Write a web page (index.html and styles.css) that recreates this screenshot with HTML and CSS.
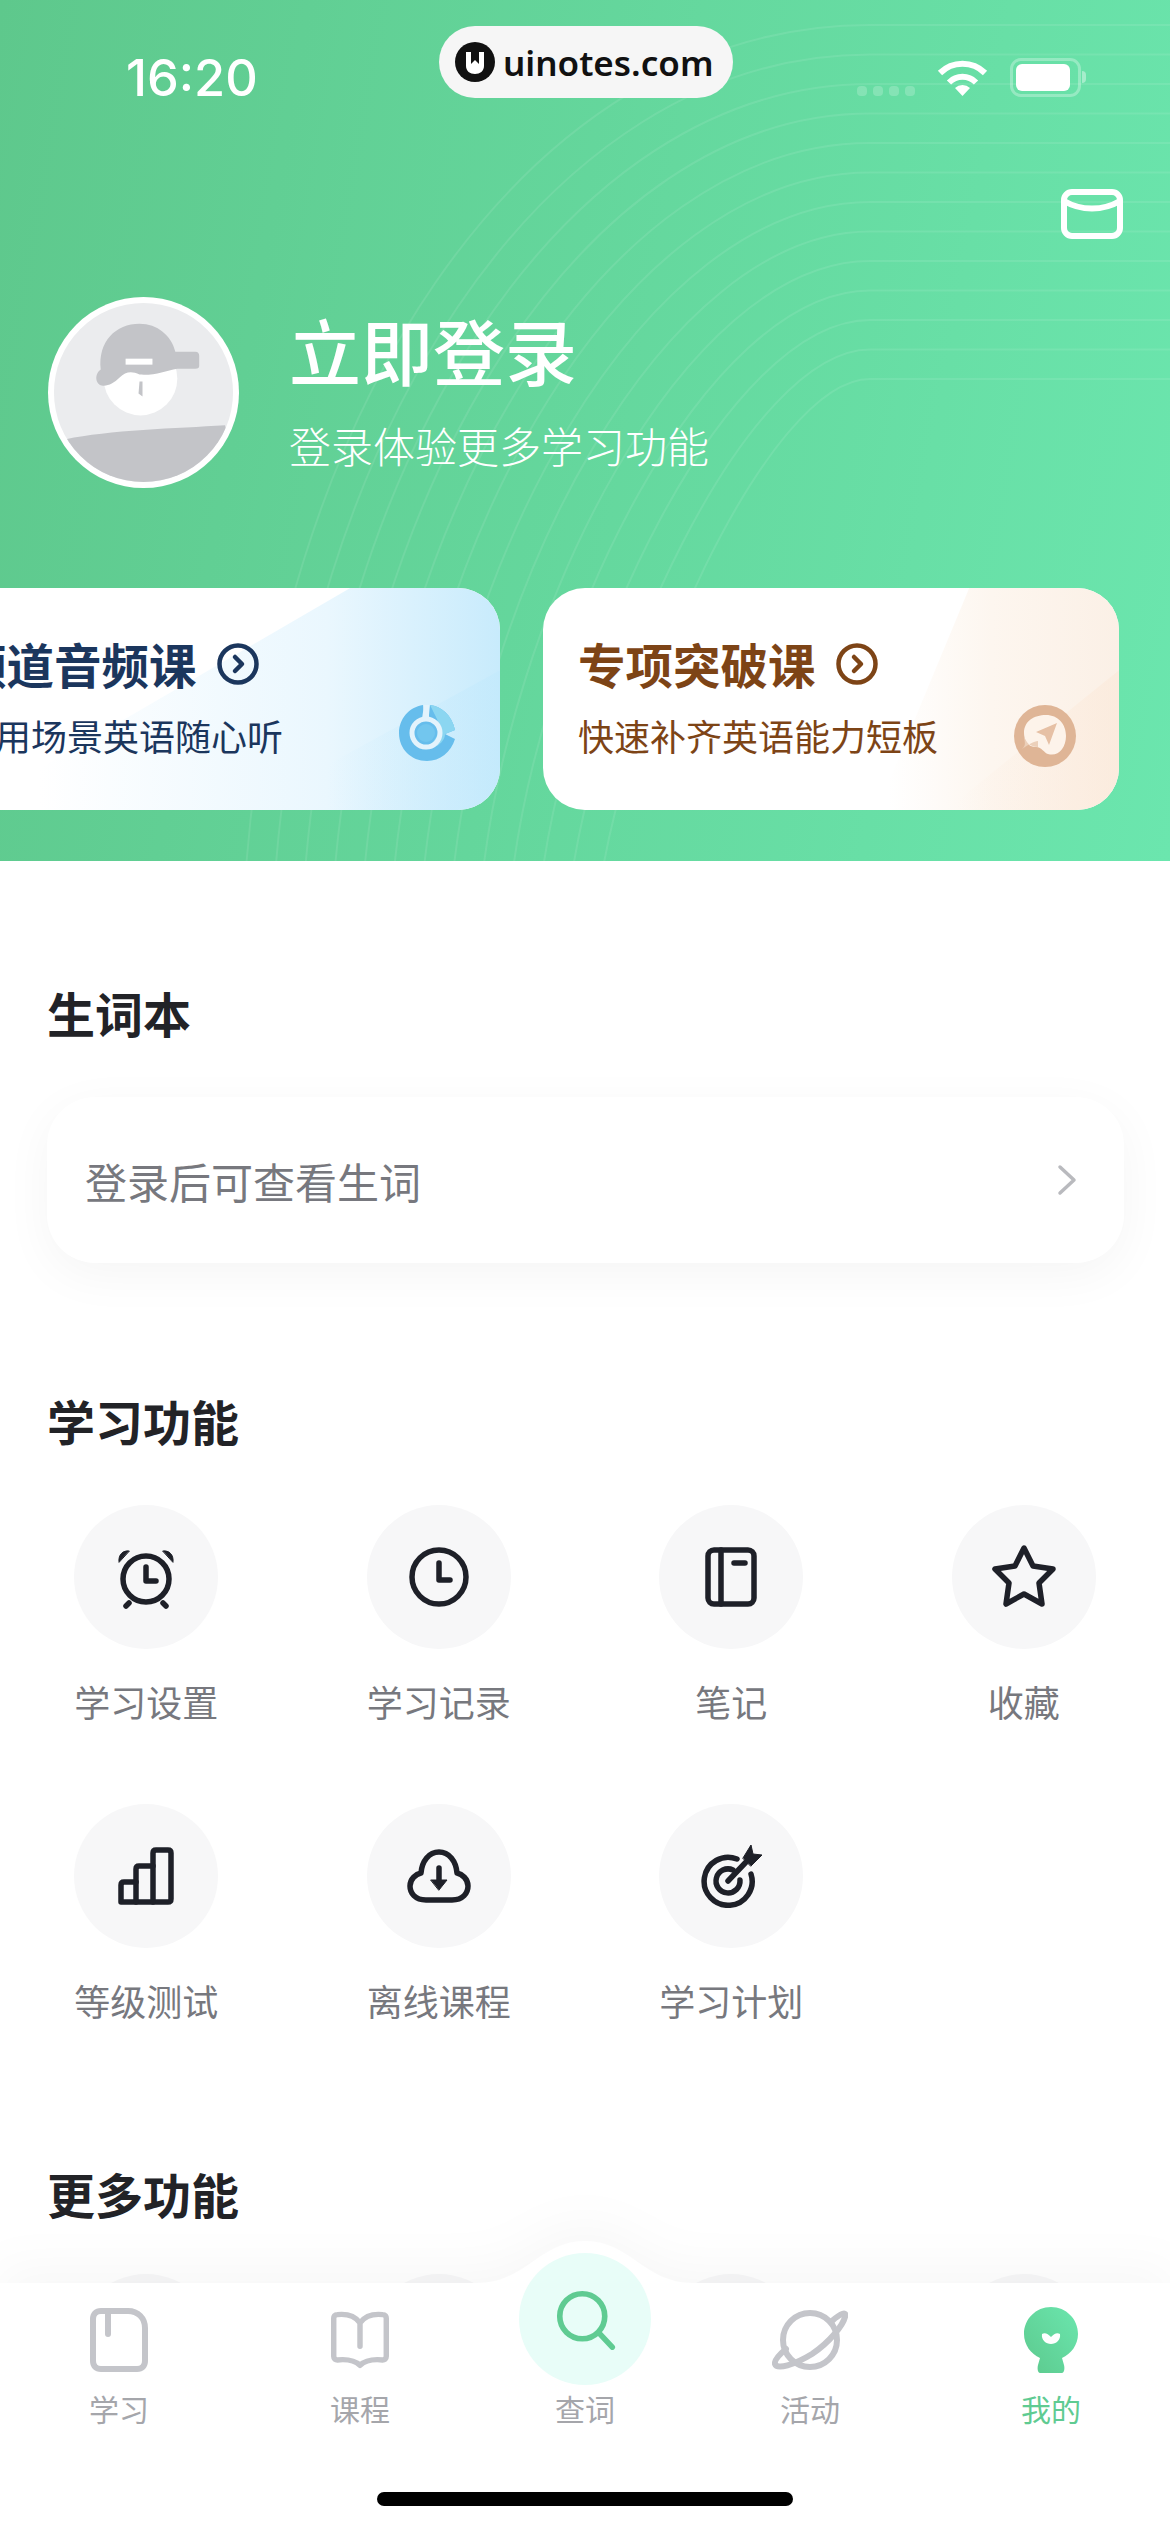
FILE: index.html
```html
<!DOCTYPE html>
<html lang="zh-CN">
<head>
  <meta charset="UTF-8">
  <meta name="viewport" content="width=device-width, initial-scale=1.0">
  <title>我的</title>
  <link rel="stylesheet" href="styles.css">
</head>
<body>
  <div class="page">
    <header class="hero">
      <svg class="hero-lines" viewBox="0 0 1170 861">
        <path d="M244 900C270 420 520 25 870 25H1170"/>
        <path d="M273.500 900C299.500 444 541 54.500 870 54.500H1170"/>
        <path d="M303 900C329 467 561 84 870 84H1170"/>
        <path d="M332.500 900C358.500 491 582 113.500 870 113.500H1170"/>
        <path d="M362 900C388 514 603 143 870 143H1170"/>
        <path d="M391.500 900C417.500 538 623 172.500 870 172.500H1170"/>
        <path d="M421 900C447 562 644 202 870 202H1170"/>
        <path d="M450.500 900C476.500 585 665 231.500 870 231.500H1170"/>
        <path d="M480 900C506 609 685 261 870 261H1170"/>
        <path d="M509.500 900C535.500 632 706 290.500 870 290.500H1170"/>
        <path d="M539 900C565 656 727 320 870 320H1170"/>
        <path d="M568.500 900C594.500 680 747 349.500 870 349.500H1170"/>
        <path d="M598 900C624 703 768 379 870 379H1170"/>
      </svg>

      <div class="status-bar">
        <span class="status-time">16:20</span>
        <div class="status-right">
          <div class="signal-dots"><i></i><i></i><i></i><i></i></div>
          <svg class="wifi" viewBox="0 0 51 37">
            <path d="M3 14A32 32 0 0 1 48 14M12 23.500A19 19 0 0 1 39 23.500" fill="none" stroke="#fff" stroke-width="6"/>
            <path d="M25.500 37L18 29A11 11 0 0 1 33 29Z" fill="#fff"/>
          </svg>
          <div class="battery"><div class="battery-level"></div></div>
          <div class="battery-nub"></div>
        </div>
      </div>

      <div class="site-badge">
        <svg class="site-logo" viewBox="0 0 40 40">
          <circle cx="20" cy="20" r="20" fill="#111"/>
          <path d="M11 10H16V22L20 18L24 22V10H29V24C29 29 25 32 20 32C15 32 11 29 11 24Z" fill="#fff"/>
        </svg>
        <span>uinotes.com</span>
      </div>

      <div class="mail-row">
        <svg class="mail-icon" viewBox="0 0 62 50" fill="none" stroke="#fff" stroke-width="6">
          <rect x="3" y="3" width="56" height="44" rx="8"/>
          <path d="M3 12C20 22 42 22 59 12"/>
        </svg>
      </div>

      <div class="profile">
        <svg class="avatar" viewBox="0 0 192 192">
          <defs><clipPath id="avatarClip"><circle cx="96" cy="96" r="90"/></clipPath></defs>
          <circle cx="96" cy="96" r="96" fill="#fff"/>
          <g clip-path="url(#avatarClip)">
            <rect width="192" height="192" fill="#ebecee"/>
            <path d="M18 143C60 134 130 132 178 129L192 192H0Z" fill="#c3c4c8"/>
          </g>
          <circle cx="93" cy="82" r="37" fill="#fff"/>
          <path d="M53 73C50 45 68 27 92 27C110 27 124 39 128 55H148C151 55 152 57 152 59V69C152 71 151 72 148 72H130C118 74 108 79 92 78C84 74 78 75 72 81C66 87 60 90 54 89C48 88 46 78 53 73Z" fill="#c3c4c8"/>
          <rect x="78" y="62" width="27" height="6" fill="#fff"/>
          <path d="M92 85L95 85L95 100L91 97Z" fill="#c3c4c8"/>
        </svg>
        <div class="profile-text">
          <div class="profile-title">立即登录</div>
          <div class="profile-sub">登录体验更多学习功能</div>
        </div>
      </div>

      <div class="promo-row">
        <div class="promo promo-blue">
          <div class="promo-title">
            <span>频道音频课</span>
            <svg class="promo-arrow" viewBox="0 0 42 42" fill="none" stroke="currentColor" stroke-width="4.500">
              <circle cx="21" cy="21" r="18.500"/><path d="M18 14L25 21L18 28" stroke-linecap="round" stroke-linejoin="round"/>
            </svg>
          </div>
          <div class="promo-sub">实用场景英语随心听</div>
          <svg class="promo-icon" viewBox="0 0 56 56">
            <path d="M24 0C10 2 0 14 0 28C0 44 12 56 28 56C41 56 52 47 56 34L46 29L56 25C53 10 42 1 31 0L30 10H25Z" fill="#66bdec"/>
            <path d="M31 0C42 1 53 10 56 25L46 29C46 38 34 46 22 44C32 42 44 30 38 14Z" fill="#8bd6f1"/>
            <circle cx="27" cy="28" r="14" fill="none" stroke="#e3f3fc" stroke-width="5"/>
            <path d="M25 0H30V14H23Z" fill="#e3f3fc"/>
            <circle cx="27" cy="28" r="9" fill="#72c6ee"/>
          </svg>
        </div>
        <div class="promo promo-orange">
          <div class="promo-title">
            <span>专项突破课</span>
            <svg class="promo-arrow" viewBox="0 0 42 42" fill="none" stroke="currentColor" stroke-width="4.500">
              <circle cx="21" cy="21" r="18.500"/><path d="M18 14L25 21L18 28" stroke-linecap="round" stroke-linejoin="round"/>
            </svg>
          </div>
          <div class="promo-sub">快速补齐英语能力短板</div>
          <svg class="promo-icon promo-icon-lg" viewBox="0 0 62 62">
            <circle cx="31" cy="31" r="31" fill="#dfb596"/>
            <path d="M10 28C10 16 20 10 32 10C44 10 52 19 52 31C52 43 44 52 34 49C30 48 28 42 22 42C14 42 10 36 10 28Z" fill="#fdf3ea"/>
            <path d="M10 30C10 36 13 40 8 44C14 40 20 36 24 36L24 42C16 42 11 37 10 30Z" fill="#ecd0ba"/>
            <path d="M43 18L22 27L31 31L35 40Z" fill="#e6c0a5"/>
          </svg>
        </div>
      </div>
    </header>

    <main class="content">
      <h2 class="section-title first">生词本</h2>
      <div class="word-card">
        <span>登录后可查看生词</span>
        <svg class="chevron" viewBox="0 0 20 32" fill="none" stroke="#b9babe" stroke-width="3.500">
          <path d="M3 3L17 16L3 29" stroke-linecap="round" stroke-linejoin="round"/>
        </svg>
      </div>

      <h2 class="section-title">学习功能</h2>
      <div class="feature-grid">
        <div class="feature">
          <div class="feature-circle">
            <svg class="feature-icon" viewBox="0 0 64 64">
              <circle cx="32" cy="34" r="23"/>
              <path d="M32 22V36H42"/>
              <path d="M15 58L12 61M49 58L52 61"/>
              <path class="solid" d="M5 17C4 10 9 5 15 6Z"/>
              <path class="solid" d="M59 17C60 10 55 5 49 6Z"/>
            </svg>
          </div>
          <div class="feature-label">学习设置</div>
        </div>
        <div class="feature">
          <div class="feature-circle">
            <svg class="feature-icon" viewBox="0 0 64 64">
              <circle cx="32" cy="32" r="27"/>
              <path d="M32 18V35H43"/>
            </svg>
          </div>
          <div class="feature-label">学习记录</div>
        </div>
        <div class="feature">
          <div class="feature-circle">
            <svg class="feature-icon" viewBox="0 0 64 64">
              <rect x="9" y="5" width="46" height="54" rx="6"/>
              <path d="M22 5V59M35 18H46"/>
            </svg>
          </div>
          <div class="feature-label">笔记</div>
        </div>
        <div class="feature">
          <div class="feature-circle">
            <svg class="feature-icon" viewBox="0 0 64 64">
              <path d="M32 3L41 21L61 24L47 38L50 59L32 49L14 59L17 38L3 24L23 21Z"/>
            </svg>
          </div>
          <div class="feature-label">收藏</div>
        </div>
        <div class="feature">
          <div class="feature-circle">
            <svg class="feature-icon" viewBox="0 0 64 64">
              <path d="M7 58V41C7 39 8 38 10 38H22V25C22 23 23 22 25 22H39V9C39 7 40 6 42 6H54C56 6 57 7 57 9V55C57 57 56 58 54 58Z"/>
              <path d="M22 38V58M39 22V58"/>
            </svg>
          </div>
          <div class="feature-label">等级测试</div>
        </div>
        <div class="feature">
          <div class="feature-circle">
            <svg class="feature-icon" viewBox="0 0 64 64">
              <path d="M19 56C8 56 3 49 3 42C3 35 9 30 14 29C15 17 22 8 32 8C42 8 49 17 50 29C55 30 61 35 61 42C61 49 56 56 45 56Z"/>
              <path d="M32 24V38"/>
              <path class="solid" d="M24 36H40L32 46Z"/>
            </svg>
          </div>
          <div class="feature-label">离线课程</div>
        </div>
        <div class="feature">
          <div class="feature-circle">
            <svg class="feature-icon" viewBox="0 0 64 64">
              <path d="M38 15A24 24 0 1 0 52 30"/>
              <path d="M34 26A12 12 0 1 0 41 36"/>
              <path d="M29 37L48 17"/>
              <path class="solid" d="M44 14L52 1L54 10L63 11L52 22Z"/>
            </svg>
          </div>
          <div class="feature-label">学习计划</div>
        </div>
      </div>

      <h2 class="section-title more">更多功能</h2>
      <div class="feature-grid more-row">
        <div class="feature"><div class="feature-circle"></div></div>
        <div class="feature"><div class="feature-circle"></div></div>
        <div class="feature"><div class="feature-circle"></div></div>
        <div class="feature"><div class="feature-circle"></div></div>
      </div>
    </main>

    <nav class="tab-bar">
      <svg class="tab-bg" viewBox="0 0 1170 292">
        <path d="M0 43H478C525 43 540 1 585 1C630 1 645 43 692 43H1170V292H0Z" fill="#fff"/>
      </svg>
      <div class="tab-items">
        <div class="tab">
          <svg class="tab-icon" viewBox="0 0 58 66" fill="none" stroke="#c4c5ca" stroke-width="6">
            <path d="M11 4H38C48 4 55 11 55 21V54C55 59 52 62 47 62H11C6 62 3 59 3 54V12C3 7 6 4 11 4Z"/>
            <path d="M18 4V27" stroke-linecap="round"/>
          </svg>
          <span>学习</span>
        </div>
        <div class="tab">
          <svg class="tab-icon" viewBox="0 0 64 66" fill="none" stroke="#c4c5ca" stroke-width="6">
            <path d="M32 14C26 6 16 4 7 5C4 5 3 7 3 9V51C3 54 5 55 7 55C17 54 26 55 32 61C38 55 47 54 57 55C59 55 61 54 61 51V9C61 7 60 5 57 5C48 4 38 6 32 14V40" stroke-linecap="round" stroke-linejoin="round"/>
          </svg>
          <span>课程</span>
        </div>
        <div class="tab">
          <div class="tab-icon search-slot">
            <div class="search-circle">
              <svg class="search-icon" viewBox="0 0 64 64" fill="none" stroke="#5fcb92" stroke-width="6">
                <circle cx="28" cy="28" r="24"/>
                <path d="M46 46L60 61" stroke-linecap="round"/>
              </svg>
            </div>
          </div>
          <span>查词</span>
        </div>
        <div class="tab">
          <svg class="tab-icon planet" viewBox="0 0 76 66" fill="none" stroke="#c4c5ca" stroke-width="6">
            <circle cx="38" cy="33" r="27"/>
            <path d="M60 14C69 6 75 4 73 10C71 18 58 35 40 47C22 58 5 63 3 57C2 53 8 47 14 42" stroke-linecap="round"/>
          </svg>
          <span>活动</span>
        </div>
        <div class="tab active">
          <svg class="tab-icon mine" viewBox="0 0 54 66">
            <defs>
              <linearGradient id="mineGrad" x1="0" y1="1" x2="1" y2="0">
                <stop offset="0" stop-color="#5cc98d"/>
                <stop offset="1" stop-color="#6be6ae"/>
              </linearGradient>
            </defs>
            <path d="M27 0C42 0 54 12 54 27C54 38 47 47 38 51L40 58C41 62 40 66 38 66H16C14 66 13 62 14 58L16 51C7 47 0 38 0 27C0 12 12 0 27 0Z" fill="url(#mineGrad)"/>
            <path d="M18 27C21 25 24 27 27 30C30 27 33 25 36 27C37 33 32 37 27 37C22 37 17 33 18 27Z" fill="#fff"/>
          </svg>
          <span>我的</span>
        </div>
      </div>
      <div class="home-indicator"></div>
    </nav>
  </div>
</body>
</html>
```

FILE: styles.css
```css
* { box-sizing: border-box; }
body { margin: 0; background: #fff; font-family: "Noto Sans CJK SC", "Noto Sans", sans-serif; }
.page { position: relative; width: 1170px; height: 2532px; overflow: hidden; background: #fff; }

/* top green area */
.hero { position: relative; height: 861px; overflow: hidden; background: linear-gradient(100deg, #5ec88c 0%, #6be6ae 100%); }
.hero-lines { position: absolute; top: 0; left: 0; width: 1170px; height: 861px; fill: none; stroke: rgba(255, 255, 255, 0.09); stroke-width: 2; }

.status-bar { position: relative; display: flex; justify-content: space-between; align-items: center; height: 154px; padding: 0 84px 0 126px; color: #fff; }
.status-time { font-family: Inter, sans-serif; font-size: 50.500px; font-weight: 500; }
.status-right { display: flex; align-items: center; }
.signal-dots { display: flex; gap: 6px; margin: 28px 22px 0 0; }
.signal-dots i { width: 10px; height: 10px; border-radius: 4px; background: rgba(255, 255, 255, 0.2); }
.wifi { width: 51px; height: 37px; margin-right: 22px; }
.battery { width: 71px; height: 39px; padding: 3px; border: 3px solid rgba(255, 255, 255, 0.3); border-radius: 11px; }
.battery-level { width: 54px; height: 27px; border-radius: 6px; background: #fff; }
.battery-nub { width: 4px; height: 12px; margin-left: 1px; border-radius: 0 4px 4px 0; background: rgba(255, 255, 255, 0.4); }

.site-badge { position: absolute; top: 26px; left: 439px; display: flex; align-items: center; gap: 8px; width: 294px; height: 72px; padding-left: 16px; border-radius: 36px; background: #f6f6f6; color: #111; font-family: "Noto Sans", sans-serif; font-size: 35px; font-weight: 600; }
.site-logo { width: 40px; height: 40px; }

.mail-row { position: relative; display: flex; justify-content: flex-end; margin-top: 35px; padding-right: 47px; }
.mail-icon { display: block; width: 62px; height: 50px; }

.profile { position: relative; display: flex; gap: 50px; margin: 58px 0 0 48px; }
.avatar { display: block; width: 191px; height: 191px; }
.profile-text { padding-top: 7px; color: #fff; }
.profile-title { font-size: 72px; font-weight: 500; line-height: 90px; }
.profile-sub { margin-top: 21px; font-size: 42px; font-weight: 300; line-height: 60px; }

.promo-row { position: relative; display: flex; gap: 43px; margin: 100px 0 0 -76px; }
.promo { position: relative; flex: none; width: 576px; height: 222px; padding: 45px 0 0 35px; overflow: hidden; border-radius: 42px; background: #fff; }
.promo::before, .promo::after { content: ""; position: absolute; top: 0; left: 0; width: 100%; height: 100%; }
.promo-blue { color: #1b365d; }
.promo-blue::before { background: linear-gradient(90deg, #fff 20%, #eaf7fe 70%, #c8ebfc 100%); clip-path: polygon(74% 0, 100% 0, 100% 100%, 15% 100%, 17% 86%); }
.promo-blue::after { background: linear-gradient(90deg, rgba(190, 232, 252, 0) 70%, rgba(190, 232, 252, 0.4) 100%); clip-path: polygon(100% 37%, 100% 100%, 60% 100%, 67% 84%); }
.promo-orange { color: #7d4416; }
.promo-orange::before { background: linear-gradient(90deg, #fff 60%, #fdf6ef 78%, #fbf0e6 100%); clip-path: polygon(74% 0, 100% 0, 100% 100%, 58% 100%); }
.promo-orange::after { background: linear-gradient(90deg, rgba(251, 231, 214, 0) 72%, rgba(251, 231, 214, 0.5) 100%); clip-path: polygon(100% 37%, 100% 100%, 70% 100%); }
.promo-title { position: relative; z-index: 1; display: flex; align-items: center; gap: 20px; font-size: 47.500px; font-weight: 700; line-height: 62px; }
.promo-arrow { width: 42px; height: 42px; }
.promo-sub { position: relative; z-index: 1; margin-top: 17px; font-size: 36px; line-height: 46px; }
.promo-icon { position: absolute; z-index: 1; top: 117px; right: 45px; width: 56px; height: 56px; }
.promo-icon-lg { right: 43px; width: 62px; height: 62px; }

/* white list area */
.content { padding: 0 47px; }
.section-title { margin: 123px 0 0; color: #222327; font-size: 48px; font-weight: 700; line-height: 68px; }
.section-title.first { margin-top: 117px; }
.section-title.more { margin-top: 134px; }

.word-card { display: flex; justify-content: space-between; align-items: center; height: 166px; margin: 51px -1px 0 0; padding: 0 47px 0 38px; border-radius: 48px; background: #fff; box-shadow: 0 12px 50px rgba(0, 0, 0, 0.045); color: #77787e; font-size: 42px; }
.chevron { width: 20px; height: 32px; }

.feature-grid { display: grid; grid-template-columns: repeat(4, 1fr); row-gap: 78px; margin: 51px -47px 0; }
.more-row { margin-top: 47px; }
.feature { display: flex; flex-direction: column; align-items: center; }
.feature-circle { display: flex; justify-content: center; align-items: center; width: 144px; height: 144px; border-radius: 50%; background: #f7f7f8; }
.feature-icon { width: 64px; height: 64px; fill: none; stroke: #1e2028; stroke-width: 5.500; stroke-linecap: round; stroke-linejoin: round; }
.feature-icon .solid { fill: #1e2028; stroke-width: 1; }
.feature-label { margin-top: 27px; color: #77787e; font-size: 36px; line-height: 50px; }

/* bottom navigation */
.tab-bar { position: absolute; bottom: 0; left: 0; width: 1170px; height: 292px; }
.tab-bg { position: absolute; top: 0; left: 0; width: 1170px; height: 292px; filter: drop-shadow(0 -14px 24px rgba(0, 0, 0, 0.03)); }
.tab-items { position: relative; display: grid; grid-template-columns: 238px 244px 206px 244px 238px; padding-top: 67px; }
.tab { display: flex; flex-direction: column; align-items: center; color: #a5a6ab; font-size: 30px; line-height: 40px; }
.tab span { margin-top: 15px; }
.tab.active { color: #5fcb92; }
.tab-icon { display: block; width: 58px; height: 66px; }
.tab-icon.planet { width: 76px; }
.tab-icon.mine { width: 54px; }
.search-slot { position: relative; width: 132px; }
.search-circle { position: absolute; top: -54px; left: 0; width: 132px; height: 132px; padding: 37px 0 0 37px; border-radius: 50%; background: #e8fdf8; }
.search-icon { display: block; width: 60px; height: 60px; }
.home-indicator { position: relative; width: 416px; height: 14px; margin: 64px auto 0; border-radius: 7px; background: #000; }
```
